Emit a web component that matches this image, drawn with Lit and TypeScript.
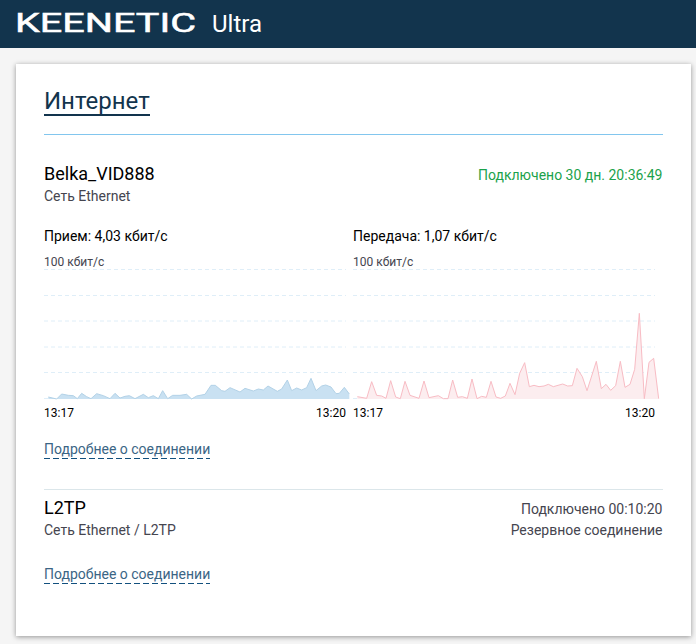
import { LitElement, html, css, svg } from "lit";
import { customElement } from "lit/decorators.js";

const W = 302;
const H = 138;
const BASE = 130;

const blueRaw: [number, number][] = [[55,441],[80,447],[95,432],[115,436],[130,437],[142,446],[155,430],[170,440],[183,446],[200,431],[220,437],[240,446],[255,430],[270,444],[285,439],[298,437],[315,446],[340,433],[355,443],[370,437],[385,446],[398,422],[413,446],[428,436],[450,436],[470,433],[485,447],[500,438],[525,433],[543,406],[556,406],[575,422],[585,424],[600,413],[630,426],[645,415],[670,423],[685,417],[700,420],[714,408],[742,424],[755,417],[772,390],[785,422],[800,414],[815,420],[830,413],[843,385],[858,422],[875,408],[887,405],[903,411],[918,431],[928,430],[943,412],[958,432]];
const pinkRaw: [number, number][] = [[37,440],[65,445],[80,395],[95,436],[110,438],[123,445],[137,392],[152,441],[166,446],[180,394],[195,436],[222,445],[237,393],[252,443],[280,437],[295,446],[309,446],[323,390],[338,442],[352,440],[367,445],[381,387],[396,446],[410,439],[424,442],[438,394],[453,441],[467,445],[481,438],[495,400],[510,434],[524,370],[539,338],[553,410],[567,406],[582,410],[597,408],[610,403],[625,410],[653,402],[668,408],[682,407],[696,355],[712,380],[726,422],[754,334],[769,416],[783,403],[797,421],[812,407],[826,334],[840,412],[855,403],[869,358],[883,190],[898,446],[912,337],[926,325],[941,446]];

// zoom crop coordinates -> chart coordinates (chart box starts at page y 269)
const toChart = (pts: [number, number][], originX: number, chartX: number) =>
  pts.map(([x, y]) => [x / 3 + originX - chartX, y / 3 + 250 - 269] as [number, number]);

const GRID = [0.5, 26.5, 52, 78, 103.5];

function chart(pts: [number, number][], fill: string, stroke: string, gridColor: string) {
  const line = pts.map((p) => p.join(",")).join(" ");
  const first = pts[0];
  const last = pts[pts.length - 1];
  const area = `${first[0]},${BASE} ${line} ${last[0]},${BASE}`;
  return svg`<svg class="plot" width=${W} height=${H} viewBox="0 0 ${W} ${H}">
    ${GRID.map((y) => svg`<line x1="0" x2=${W} y1=${y} y2=${y} stroke=${gridColor} stroke-dasharray="4 3" />`)}
    <line x1="0" x2=${W} y1=${BASE - 0.5} y2=${BASE - 0.5} stroke=${gridColor} stroke-dasharray="4 3" />
    <polygon points=${area} fill=${fill} />
    <polyline points=${line} fill="none" stroke=${stroke} />
  </svg>`;
}

const blue = chart(toChart(blueRaw, 30, 44), "#c9e1f2", "#b3d2e7", "#dfeef8");
const pink = chart(toChart(pinkRaw, 345, 353), "#fcedef", "#f8bcc4", "#dfeef8");

@customElement("app-root")
export class AppRoot extends LitElement {
  static styles = css`
    :host {
      display: block;
      width: 696px;
      height: 644px;
      overflow: hidden;
      background: #f5f5f5;
      font-family: Roboto, "Liberation Sans", sans-serif;
      color: #000;
    }
    .top {
      height: 48px;
      background: #12344d;
      color: #fff;
      display: flex;
      align-items: center;
      padding-left: 17px;
    }
    .logo {
      display: block;
      width: 179px;
      height: 24px;
      fill: #fff;
      overflow: visible;
    }
    .logo text {
      font: 400 25.3px Roboto, sans-serif;
      stroke: #fff;
      stroke-width: 0.5px;
    }
    .model {
      margin-left: 16px;
      font-size: 24px;
      line-height: 28px;
      font-weight: 400;
    }
    .card {
      box-sizing: border-box;
      margin: 16px 5px 0 16px;
      height: 572px;
      background: #fff;
      box-shadow: 0 1px 5px rgba(0, 0, 0, 0.4);
      padding: 24px 28.5px 0 28px;
    }
    h1 {
      display: inline-block;
      margin: 0;
      font-size: 24px;
      font-weight: 400;
      line-height: 26px;
      color: #12344d;
      border-bottom: 2px solid #12344d;
    }
    .rule {
      margin-top: 18px;
      height: 1px;
      background: #82c6ee;
    }
    .conn {
      display: flex;
      justify-content: space-between;
    }
    .first {
      margin-top: 27px;
    }
    .name {
      font-size: 18px;
      line-height: 24px;
    }
    .sub {
      font-size: 14px;
      line-height: 21px;
      color: #45454f;
    }
    .right {
      text-align: right;
      font-size: 14px;
      line-height: 21px;
      color: #45454f;
      padding-top: 3px;
    }
    .green {
      color: #1ba24b;
    }
    .charts {
      display: grid;
      grid-template-columns: 309px 309px;
      margin-top: 19px;
    }
    .speed {
      font-size: 14px;
      line-height: 20px;
    }
    .scale {
      font-size: 12px;
      line-height: 14px;
      color: #45454f;
      margin-top: 9px;
    }
    .plot {
      display: block;
      overflow: visible;
    }
    .times {
      width: 302px;
      display: flex;
      justify-content: space-between;
      font-size: 12px;
      line-height: 14px;
      margin-top: -1px;
    }
    .more {
      display: inline-block;
      font-size: 14px;
      line-height: 18px;
      padding-bottom: 1px;
      color: #3b6585;
      background: linear-gradient(to right, #12507e 6px, transparent 6px) left bottom / 9px 1px repeat-x;
    }
    .more-a {
      margin-top: 20px;
    }
    .sep {
      margin-top: 30px;
      height: 1px;
      background: #dbe6ea;
    }
    .second {
      margin-top: 6px;
    }
    .more-b {
      margin-top: 24px;
    }
  `;

  render() {
    return html`
      <div class="top">
        <svg class="logo" viewBox="0 0 179 24" aria-label="KEENETIC">
          <text x="-2" y="20" textLength="181" lengthAdjust="spacingAndGlyphs">KEENETIC</text>
        </svg>
        <span class="model">Ultra</span>
      </div>
      <div class="card">
        <h1>Интернет</h1>
        <div class="rule"></div>
        <div class="conn first">
          <div>
            <div class="name">Belka_VID888</div>
            <div class="sub">Сеть Ethernet</div>
          </div>
          <div class="right green">Подключено 30 дн. 20:36:49</div>
        </div>
        <div class="charts">
          <div>
            <div class="speed">Прием: 4,03 кбит/с</div>
            <div class="scale">100 кбит/с</div>
            ${blue}
            <div class="times"><span>13:17</span><span>13:20</span></div>
          </div>
          <div>
            <div class="speed">Передача: 1,07 кбит/с</div>
            <div class="scale">100 кбит/с</div>
            ${pink}
            <div class="times"><span>13:17</span><span>13:20</span></div>
          </div>
        </div>
        <span class="more more-a">Подробнее о соединении</span>
        <div class="sep"></div>
        <div class="conn second">
          <div>
            <div class="name">L2TP</div>
            <div class="sub">Сеть Ethernet / L2TP</div>
          </div>
          <div class="right">Подключено 00:10:20<br />Резервное соединение</div>
        </div>
        <span class="more more-b">Подробнее о соединении</span>
      </div>
    `;
  }
}
